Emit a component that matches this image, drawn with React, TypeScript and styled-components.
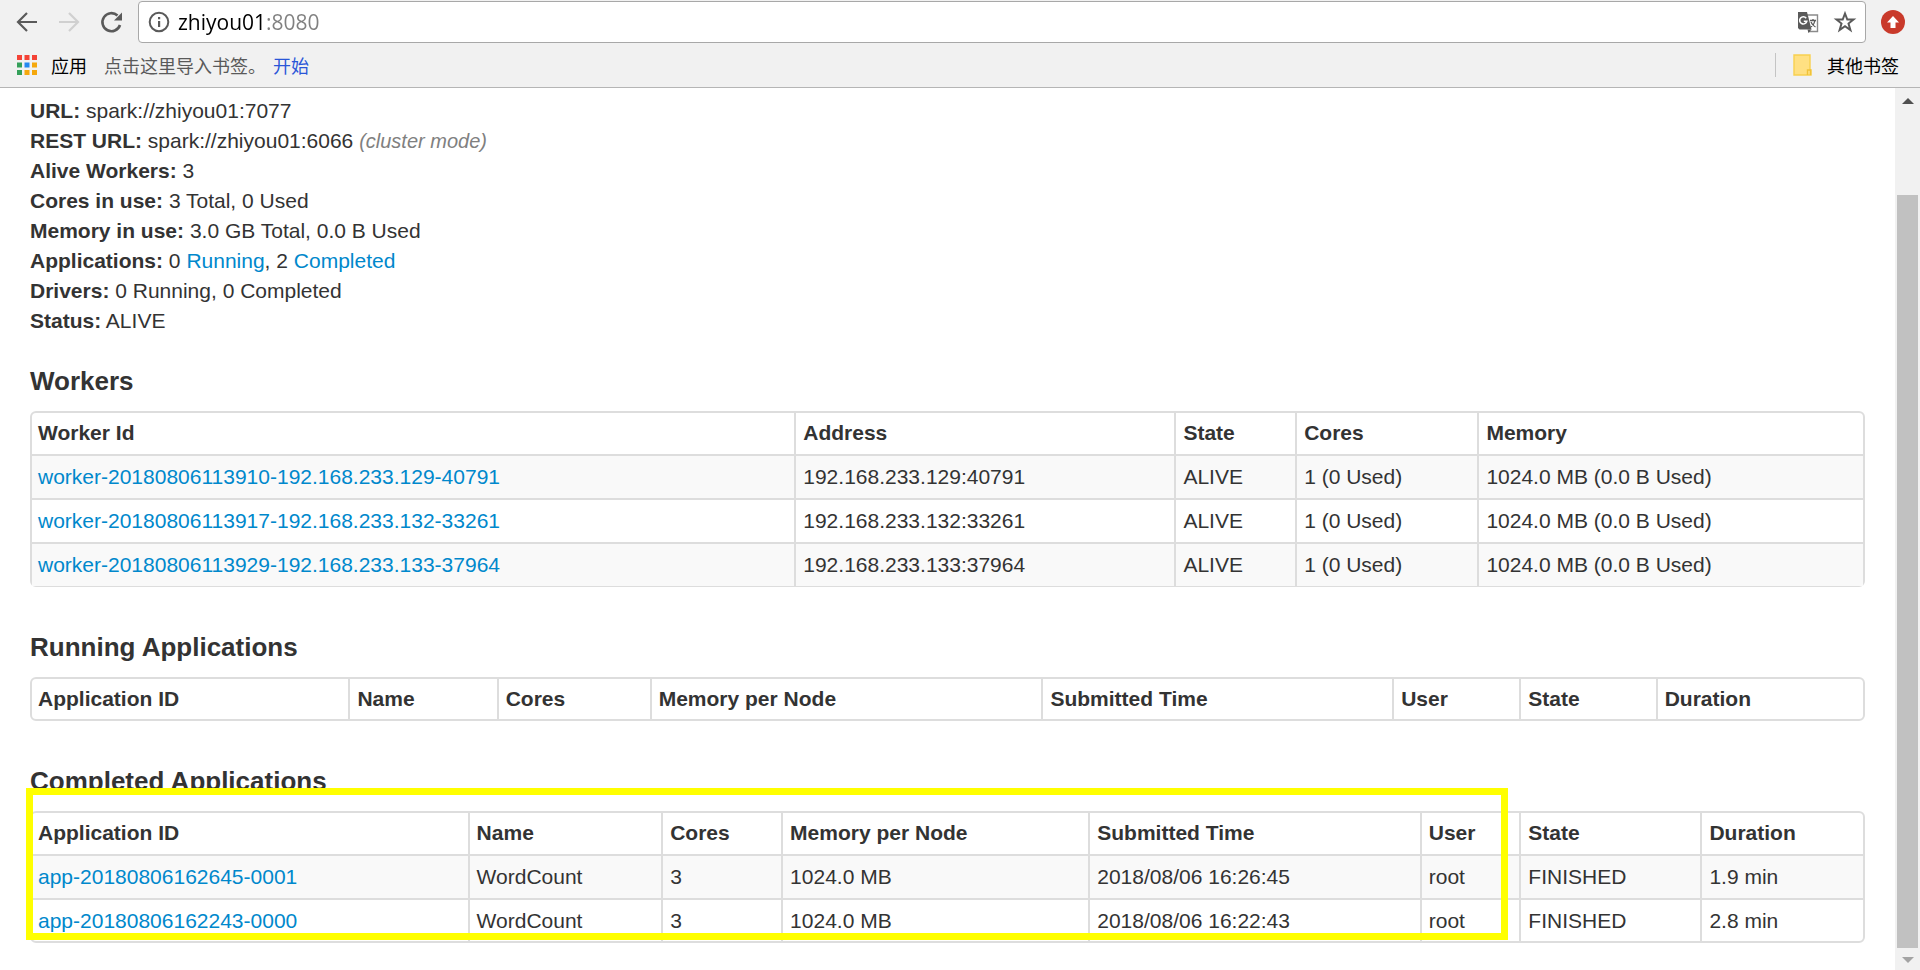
import React from "react";
import styled, { createGlobalStyle } from "styled-components";

const GlobalStyle = createGlobalStyle`
  * { box-sizing: border-box; }
  html, body, #root { height: 100%; }
  body {
    margin: 0;
    overflow: hidden;
    background: #fff;
    color: #333;
    font: 21px/30px "Liberation Sans", Arial, sans-serif;
  }
`;

const cjk = `"Noto Sans CJK SC", "Liberation Sans", sans-serif`;

const Browser = styled.div`
  display: flex;
  flex-direction: column;
  height: 100vh;
`;

const Chrome = styled.header`
  background: #f1f1f1;
  border-bottom: 1px solid #b5b5b5;
`;

const Toolbar = styled.div`
  display: flex;
  align-items: center;
  padding: 1px 15px 0;
`;

const IconButton = styled.button`
  display: flex;
  padding: 0;
  border: 0;
  background: none;
`;

const NavButtons = styled.nav`
  display: flex;
  gap: 18px;
  margin-right: 15px;
`;

const AddressBar = styled.form`
  display: flex;
  flex: 1;
  align-items: center;
  height: 42px;
  padding: 0 8px;
  gap: 7px;
  margin-right: 15px;
  background: #fff;
  border: 1px solid #a8a8a8;
  border-radius: 4px;
`;

/* The host is black and the port after it is grey. */
const Address = styled.input`
  flex: 1;
  min-width: 0;
  padding: 0;
  border: 0;
  outline: 0;
  color: transparent;
  background: linear-gradient(to right, #000 88px, #808080 88px);
  background-clip: text;
  -webkit-background-clip: text;
  font: 21px/30px "Open Sans", "Noto Sans", sans-serif;
`;

const AddressActions = styled.div`
  display: flex;
  gap: 13px;
`;

const Bookmarks = styled.div`
  display: flex;
  align-items: center;
  height: 44px;
  padding: 0 21px 0 16px;
  color: #5a5a5a;
  font: 18px/24px ${cjk};
`;

const BookmarkButton = styled.button<{ $gap: number }>`
  display: flex;
  align-items: center;
  gap: ${(p) => p.$gap}px;
  padding: 0;
  border: 0;
  background: none;
  color: #000;
  font: inherit;
`;

const ImportHint = styled.p`
  display: flex;
  flex: 1;
  gap: 7px;
  margin: 0 0 0 17px;
`;

const StartLink = styled.a`
  color: #2a56d8;
  text-decoration: none;
`;

const OtherBookmarks = styled.div`
  padding-left: 17px;
  border-left: 1px solid #c4c4c4;
`;

const Viewport = styled.div`
  display: flex;
  flex: 1;
  min-height: 0;
`;

const Page = styled.main`
  flex: 1;
  min-width: 0;
  padding: 8px 30px;
`;

const Summary = styled.ul`
  margin: 0 0 30px;
  padding: 0;
  list-style: none;
`;

const Mode = styled.em`
  color: #808080;
  font-size: 20px;
`;

const Link = styled.a`
  color: #0088cc;
  text-decoration: none;
`;

const Section = styled.section`
  position: relative;
  margin-bottom: 45px;
`;

const Title = styled.h4`
  margin: 0 0 15px;
  font-size: 26px;
  line-height: 30px;
`;

const Table = styled.table<{ $edge: number }>`
  width: 100%;
  border: 2px solid #ddd;
  border-bottom-width: ${(p) => p.$edge}px;
  border-radius: 6px;
  border-collapse: separate;
  border-spacing: 0;
  text-align: left;

  th, td {
    padding: 6px 7px;
  }
  th:first-child, td:first-child {
    padding-left: 6px;
    padding-right: 9px;
  }
  thead th {
    padding-top: 5px;
  }
  > :last-child > tr:last-child > * {
    padding-bottom: ${(p) => 7 - p.$edge}px;
  }
  th + th, td + td {
    border-left: 2px solid #ddd;
  }
  td {
    border-top: 2px solid #ddd;
  }
  tbody tr:nth-child(odd) td {
    background: #f9f9f9;
  }
`;

const Highlight = styled.div`
  position: absolute;
  top: 22px;
  left: -4px;
  bottom: 3px;
  width: calc(81% - 4px);
  border: 7px solid #ff0;
  pointer-events: none;
`;

const Scrollbar = styled.div`
  display: flex;
  flex-direction: column;
  align-items: center;
  width: 25px;
  padding: 10px 0 7px;
  background: #f1f1f1;
`;

const Thumb = styled.div`
  flex: 1;
  width: 21px;
  margin: 91px 0 9px;
  background: #c1c1c1;
`;

const BackIcon = () => (
  <svg width="24" height="24" viewBox="0 0 24 24" fill="none" stroke="#5a5a5a" strokeWidth="2.200">
    <path d="M22 12H3M12 3l-9 9 9 9" />
  </svg>
);

const ForwardIcon = () => (
  <svg width="24" height="24" viewBox="0 0 24 24" fill="none" stroke="#d0d0d0" strokeWidth="2.200">
    <path d="M2 12h19M12 3l9 9-9 9" />
  </svg>
);

const ReloadIcon = () => (
  <svg width="24" height="24" viewBox="0 0 24 24">
    <path d="M21 15A9 9 0 1 1 18.500 5.500" fill="none" stroke="#5a5a5a" strokeWidth="2.600" />
    <path d="M23 2.500v8h-8z" fill="#5a5a5a" />
  </svg>
);

const InfoIcon = () => (
  <svg width="24" height="24" viewBox="0 0 24 24" aria-hidden="true">
    <circle cx="12" cy="12" r="9.300" fill="none" stroke="#5a5a5a" strokeWidth="2" />
    <path d="M11 11h2.200v6H11zM11 7h2.200v2.300H11z" fill="#5a5a5a" />
  </svg>
);

const TranslateIcon = () => (
  <svg width="24" height="24" viewBox="0 0 24 24">
    <path d="M11 5h10.500v16.500H12" fill="#fff" stroke="#8a8a8a" strokeWidth="1.400" />
    <path d="M2 2h9l4.500 17.500H3.500L2 18z" fill="#5a5a5a" />
    <path d="M11.500 19.500h4L12.500 23z" fill="#5a5a5a" />
    <path d="M10.200 8.200A3.600 3.600 0 1 0 10.800 11.200H7.800" fill="none" stroke="#fff" strokeWidth="1.600" />
    <path d="M14 10.500h6M17 9v1.500M19 10.500c-.5 3-2 5-4 6.500M15 12c1 2.500 2.500 4 4.500 5" fill="none" stroke="#5a5a5a" strokeWidth="1.300" />
  </svg>
);

const StarIcon = () => (
  <svg width="24" height="24" viewBox="0 0 24 24">
    <path d="M12 3.500l2.300 6h6.200l-5 4 1.900 6.500-5.400-3.800L6.600 20l1.900-6.500-5-4h6.200z" fill="none" stroke="#5a5a5a" strokeWidth="2" />
  </svg>
);

const UpdateIcon = () => (
  <svg width="24" height="24" viewBox="0 0 24 24">
    <circle cx="12" cy="12" r="12" fill="#c93a2b" />
    <path d="M12 6l6 6.500h-3.500V18h-5v-5.500H6z" fill="#fff" />
  </svg>
);

const appColors = ["#f44336", "#f44336", "#f44336", "#34a05a", "#2489f0", "#f5a80c", "#34a05a", "#f5a80c", "#f5a80c"];

const AppsIcon = () => (
  <svg width="22" height="22" viewBox="0 0 22 22" aria-hidden="true">
    {appColors.map((fill, i) => (
      <rect key={i} x={1 + (i % 3) * 7.5} y={1 + Math.floor(i / 3) * 7.5} width="5" height="5" fill={fill} />
    ))}
  </svg>
);

const FolderIcon = () => (
  <svg width="20" height="24" viewBox="0 0 20 24" aria-hidden="true">
    <path d="M1 2h16v15h1v5H1z" fill="#ffe082" stroke="#f8d04f" strokeWidth="1.400" />
    <path d="M14.500 22v-5h3v5" fill="none" stroke="#f0c239" strokeWidth="1.400" />
  </svg>
);

const ArrowIcon = ({ down }: { down?: boolean }) => (
  <svg width="12" height="6" viewBox="0 0 12 6" aria-hidden="true">
    <path d={down ? "M0 0h12L6 6z" : "M0 6h12L6 0z"} fill={down ? "#a3a3a3" : "#505050"} />
  </svg>
);

type Cell = string | { link: string };

type DataTableProps = { columns: string[]; rows: Cell[][]; edge?: number };

const DataTable = ({ columns, rows, edge = 2 }: DataTableProps) => (
  <Table $edge={edge}>
    <thead>
      <tr>{columns.map((c) => <th key={c} scope="col">{c}</th>)}</tr>
    </thead>
    {rows.length > 0 && (
      <tbody>
        {rows.map((row, i) => (
          <tr key={i}>
            {row.map((cell, j) => (
              <td key={j}>{typeof cell === "string" ? cell : <Link href="#">{cell.link}</Link>}</td>
            ))}
          </tr>
        ))}
      </tbody>
    )}
  </Table>
);

const workers = [
  ["20180806113910", "192.168.233.129", "40791"],
  ["20180806113917", "192.168.233.132", "33261"],
  ["20180806113929", "192.168.233.133", "37964"],
].map(([time, ip, port]): Cell[] => [
  { link: `worker-${time}-${ip}-${port}` },
  `${ip}:${port}`,
  "ALIVE",
  "1 (0 Used)",
  "1024.0 MB (0.0 B Used)",
]);

const appColumns = ["Application ID", "Name", "Cores", "Memory per Node", "Submitted Time", "User", "State", "Duration"];

const completed: Cell[][] = [
  [{ link: "app-20180806162645-0001" }, "WordCount", "3", "1024.0 MB", "2018/08/06 16:26:45", "root", "FINISHED", "1.9 min"],
  [{ link: "app-20180806162243-0000" }, "WordCount", "3", "1024.0 MB", "2018/08/06 16:22:43", "root", "FINISHED", "2.8 min"],
];

export default function App() {
  return (
    <Browser>
      <GlobalStyle />
      <Chrome>
        <Toolbar>
          <NavButtons>
            <IconButton aria-label="Back"><BackIcon /></IconButton>
            <IconButton aria-label="Forward" disabled><ForwardIcon /></IconButton>
            <IconButton aria-label="Reload"><ReloadIcon /></IconButton>
          </NavButtons>
          <AddressBar>
            <InfoIcon />
            <Address type="text" aria-label="Address" defaultValue="zhiyou01:8080" spellCheck={false} />
            <AddressActions>
              <IconButton type="button" aria-label="Translate"><TranslateIcon /></IconButton>
              <IconButton type="button" aria-label="Bookmark"><StarIcon /></IconButton>
            </AddressActions>
          </AddressBar>
          <IconButton aria-label="Update"><UpdateIcon /></IconButton>
        </Toolbar>
        <Bookmarks>
          <BookmarkButton $gap={13}><AppsIcon />应用</BookmarkButton>
          <ImportHint>点击这里导入书签。<StartLink href="#">开始</StartLink></ImportHint>
          <OtherBookmarks>
            <BookmarkButton $gap={14}><FolderIcon />其他书签</BookmarkButton>
          </OtherBookmarks>
        </Bookmarks>
      </Chrome>
      <Viewport>
        <Page>
          <Summary>
            <li><strong>URL:</strong> spark://zhiyou01:7077</li>
            <li><strong>REST URL:</strong> spark://zhiyou01:6066 <Mode>(cluster mode)</Mode></li>
            <li><strong>Alive Workers:</strong> 3</li>
            <li><strong>Cores in use:</strong> 3 Total, 0 Used</li>
            <li><strong>Memory in use:</strong> 3.0 GB Total, 0.0 B Used</li>
            <li><strong>Applications:</strong> 0 <Link href="#running">Running</Link>, 2 <Link href="#completed">Completed</Link></li>
            <li><strong>Drivers:</strong> 0 Running, 0 Completed</li>
            <li><strong>Status:</strong> ALIVE</li>
          </Summary>
          <Section>
            <Title>Workers</Title>
            <DataTable columns={["Worker Id", "Address", "State", "Cores", "Memory"]} rows={workers} edge={1} />
          </Section>
          <Section id="running">
            <Title>Running Applications</Title>
            <DataTable columns={appColumns} rows={[]} />
          </Section>
          <Section id="completed">
            <Title>Completed Applications</Title>
            <DataTable columns={appColumns} rows={completed} />
            <Highlight />
          </Section>
        </Page>
        <Scrollbar>
          <ArrowIcon />
          <Thumb />
          <ArrowIcon down />
        </Scrollbar>
      </Viewport>
    </Browser>
  );
}
